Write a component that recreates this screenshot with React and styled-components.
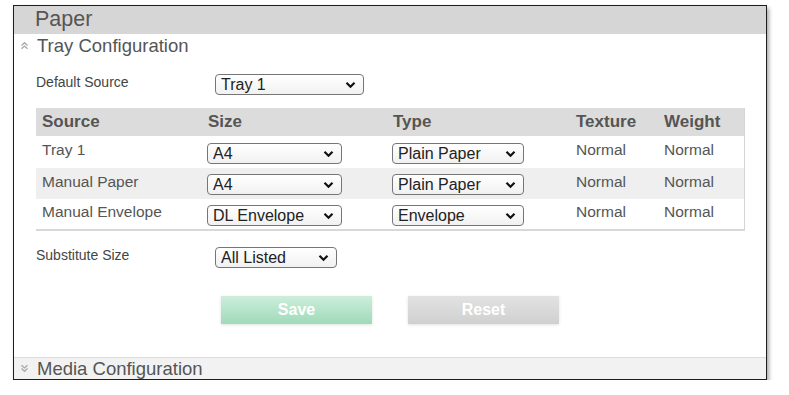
import React from 'react'
import styled, { createGlobalStyle } from 'styled-components'

const rows = [
  { source: 'Tray 1', size: 'A4', type: 'Plain Paper' },
  { source: 'Manual Paper', size: 'A4', type: 'Plain Paper' },
  { source: 'Manual Envelope', size: 'DL Envelope', type: 'Envelope' },
]

const Chevron = ({ down }) => (
  <svg width="9" height="9" viewBox="0 0 9 9">
    <g fill="none" stroke="#a9a9a9" strokeWidth="1.4" transform={down ? 'rotate(180 4.5 4.5)' : undefined}>
      <polyline points="1.5,4.5 4.5,1.8 7.5,4.5" />
      <polyline points="1.5,7.8 4.5,5.1 7.5,7.8" />
    </g>
  </svg>
)

const Select = ({ value, width }) => (
  <SelectWrap $width={width}>
    <SelectBox defaultValue={value}>
      <option>{value}</option>
    </SelectBox>
    <Caret>
      <svg width="11" height="8" viewBox="0 0 11 8">
        <polyline points="1.5,1.8 5.5,5.8 9.5,1.8" fill="none" stroke="#111" strokeWidth="2.2" />
      </svg>
    </Caret>
  </SelectWrap>
)

const App = () => {
  return (
    <>
      <GlobalStyle />
      <Frame>
        <Header>Paper</Header>
        <SectionTitle>
          <Chevron />
          <span>Tray Configuration</span>
        </SectionTitle>
        <Body>
          <FormRow>
            <Label>Default Source</Label>
            <Select value="Tray 1" width={149} />
          </FormRow>

          <Table>
            <colgroup>
              <col style={{ width: 166 }} />
              <col style={{ width: 185 }} />
              <col style={{ width: 183 }} />
              <col style={{ width: 88 }} />
              <col style={{ width: 86 }} />
            </colgroup>
            <thead>
              <tr>
                <Th>Source</Th>
                <Th>Size</Th>
                <Th>Type</Th>
                <Th>Texture</Th>
                <Th>Weight</Th>
              </tr>
            </thead>
            <tbody>
              {rows.map((r, i) => (
                <Tr key={r.source} $odd={i % 2 === 1} $first={i === 0}>
                  <Td>{r.source}</Td>
                  <Td $sel>
                    <Select value={r.size} width={135} />
                  </Td>
                  <Td $sel>
                    <Select value={r.type} width={132} />
                  </Td>
                  <Td>Normal</Td>
                  <Td>Normal</Td>
                </Tr>
              ))}
            </tbody>
          </Table>

          <FormRow $top={16}>
            <Label>Substitute Size</Label>
            <Select value="All Listed" width={122} />
          </FormRow>

          <Buttons>
            <Button $kind="save">Save</Button>
            <Button>Reset</Button>
          </Buttons>
        </Body>
        <Footer>
          <Chevron down />
          <span>Media Configuration</span>
        </Footer>
      </Frame>
    </>
  )
}

export default App

const GlobalStyle = createGlobalStyle`
  body {
    margin: 0;
    background: #fff;
    font-family: "Liberation Sans", Arial, sans-serif;
  }
`

const Frame = styled.div`
  margin: 5px 0 0 13px;
  width: 752px;
  height: 373px;
  border: 1.5px solid #1e1e1e;
  box-shadow: 2px 3px 4px rgba(0, 0, 0, 0.35);
  display: flex;
  flex-direction: column;
  background: #fff;
`

const Header = styled.div`
  height: 28px;
  line-height: 27px;
  background: #d6d6d6;
  padding-left: 21px;
  font-size: 21.5px;
  color: #555;
`

const SectionTitle = styled.div`
  height: 23px;
  display: flex;
  align-items: center;
  gap: 8px;
  padding-left: 6px;
  font-size: 18.5px;
  color: #555;
`

const Body = styled.div`
  flex: 1;
  padding: 17px 0 0 22px;
`

const FormRow = styled.div`
  display: flex;
  align-items: flex-start;
  margin-top: ${p => p.$top || 0}px;
`

const Label = styled.div`
  width: 179px;
  font-size: 14px;
  color: #444;
  padding-top: 0;
`

const SelectWrap = styled.span`
  position: relative;
  display: inline-block;
  vertical-align: middle;
  width: ${p => p.$width}px;
  height: 21px;
`

const SelectBox = styled.select`
  appearance: none;
  display: block;
  width: 100%;
  height: 100%;
  box-sizing: border-box;
  border: 1px solid #767676;
  border-radius: 4px;
  background: linear-gradient(#ffffff, #f1f1f1);
  font-family: "Liberation Sans", Arial, sans-serif;
  font-size: 16px;
  color: #222;
  padding: 0 0 0 5px;
  outline: none;
`

const Caret = styled.span`
  position: absolute;
  right: 8px;
  top: 7px;
  display: flex;
  pointer-events: none;
`

const Table = styled.table`
  margin-top: 13px;
  width: 708px;
  border-collapse: collapse;
  table-layout: fixed;
  border-right: 1px solid #d4d4d4;
  border-bottom: 2px solid #d8d8d8;
`

const Th = styled.th`
  box-sizing: border-box;
  height: 28px;
  background: #dcdcdc;
  text-align: left;
  padding: 0 6px;
  font-size: 17px;
  font-weight: bold;
  color: #555;
`

const Tr = styled.tr`
  background: ${p => (p.$odd ? '#efefef' : '#fff')};
  height: ${p => (p.$first ? 32 : 31)}px;
`

const Td = styled.td`
  box-sizing: border-box;
  padding: ${p => (p.$sel ? '2px 5px 0' : '0 6px 4px')};
  font-size: 15.5px;
  color: #555;
  vertical-align: middle;
  line-height: 18px;
`

const Buttons = styled.div`
  display: flex;
  gap: 36px;
  margin: 28px 0 0 185px;
`

const Button = styled.div`
  width: 151px;
  height: 28px;
  line-height: 28px;
  text-align: center;
  font-size: 16px;
  font-weight: bold;
  color: #fff;
  background: ${p =>
    p.$kind === 'save'
      ? 'linear-gradient(#cdeedb, #9fdab9)'
      : 'linear-gradient(#e2e2e2, #d0d0d0)'};
  box-shadow: 0 1px 3px rgba(0, 0, 0, 0.12);
`

const Footer = styled.div`
  height: 21px;
  display: flex;
  align-items: center;
  gap: 8px;
  padding-left: 6px;
  background: #f2f2f2;
  border-top: 1px solid #dcdcdc;
  font-size: 18.5px;
  color: #555;
`
